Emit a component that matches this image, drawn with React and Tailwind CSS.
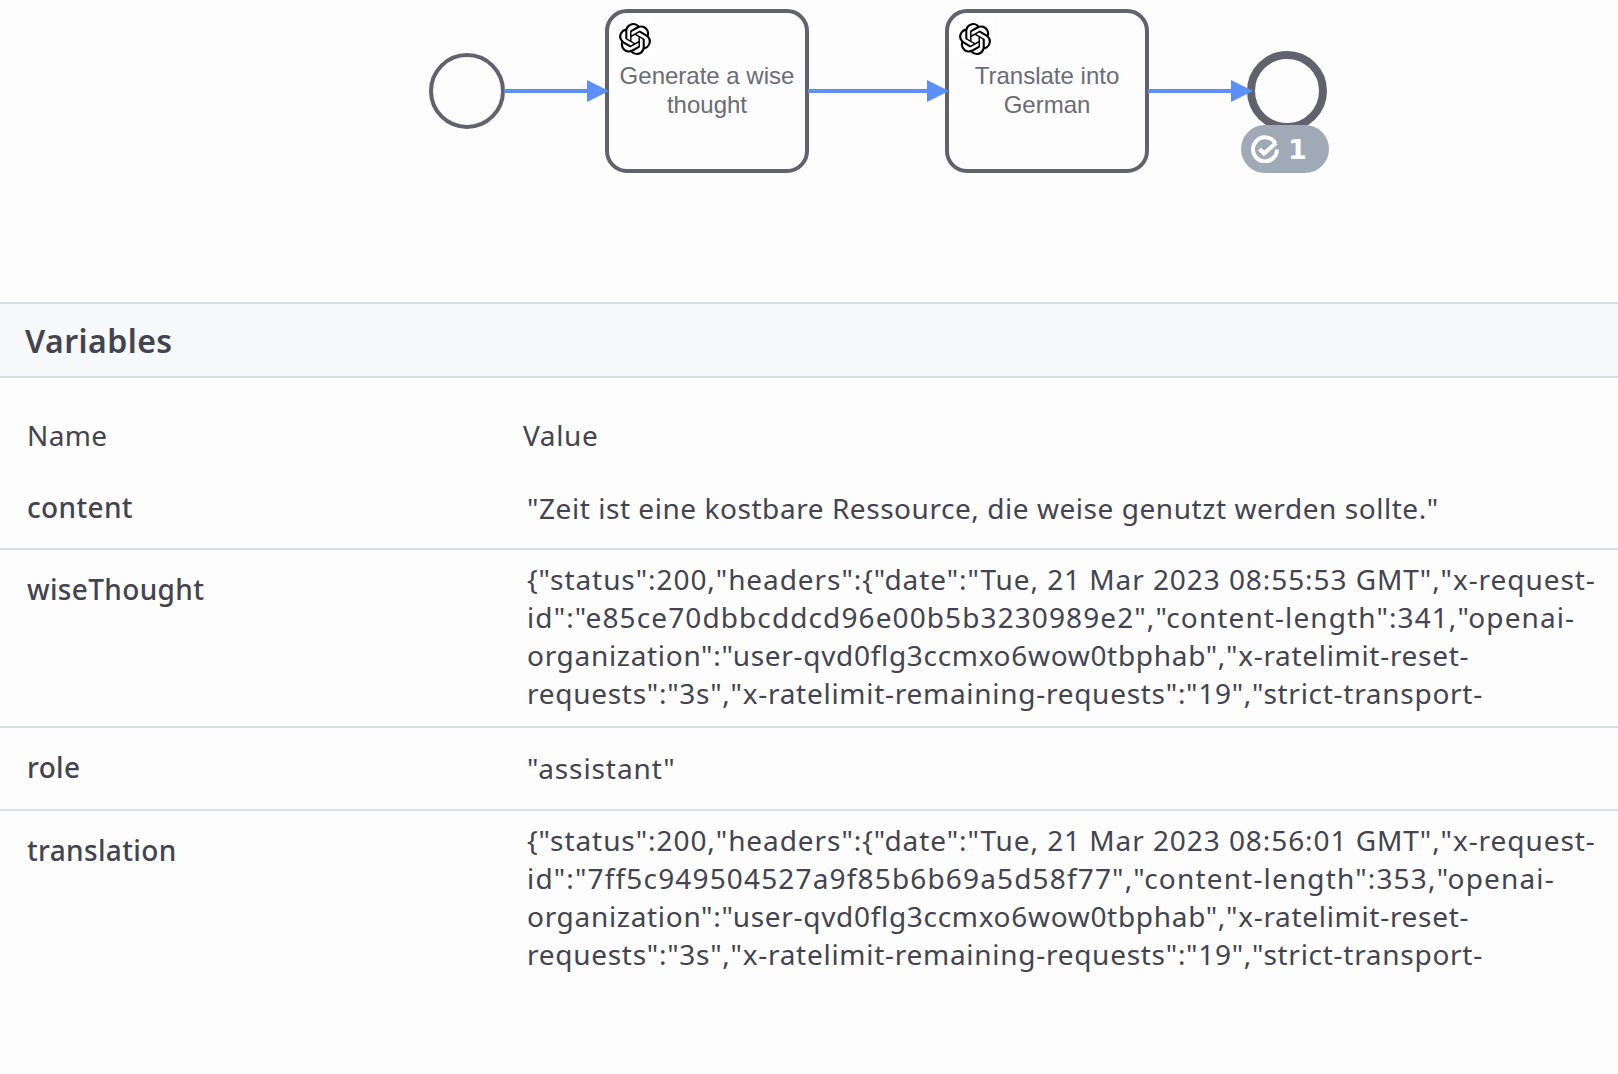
import React from 'react';
import { SiOpenai } from 'react-icons/si';

const plex = { fontFamily: '"Noto Sans", sans-serif' };

// each line gets its own tracking, the fallback font runs narrower than the original
const rows = [
  {
    name: 'content',
    height: 'h-[82px]',
    pad: 'pt-[21px]',
    lines: [['"Zeit ist eine kostbare Ressource, die weise genutzt werden sollte."', 'tracking-[0.55px]']],
  },
  {
    name: 'wiseThought',
    height: 'h-[178px]',
    pad: 'pt-[10px]',
    lines: [
      ['{"status":200,"headers":{"date":"Tue, 21 Mar 2023 08:55:53 GMT","x-request-', 'tracking-[0.93px]'],
      ['id":"e85ce70dbbcddcd96e00b5b3230989e2","content-length":341,"openai-', 'tracking-[1.1px]'],
      ['organization":"user-qvd0flg3ccmxo6wow0tbphab","x-ratelimit-reset-', 'tracking-[0.69px]'],
      ['requests":"3s","x-ratelimit-remaining-requests":"19","strict-transport-', 'tracking-[0.72px]'],
    ],
  },
  {
    name: 'role',
    height: 'h-[83px]',
    pad: 'pt-[21px]',
    lines: [['"assistant"', 'tracking-[0.9px]']],
  },
  {
    name: 'translation',
    height: 'h-[178px]',
    pad: 'pt-[10px]',
    lines: [
      ['{"status":200,"headers":{"date":"Tue, 21 Mar 2023 08:56:01 GMT","x-request-', 'tracking-[0.93px]'],
      ['id":"7ff5c949504527a9f85b6b69a5d58f77","content-length":353,"openai-', 'tracking-[1.16px]'],
      ['organization":"user-qvd0flg3ccmxo6wow0tbphab","x-ratelimit-reset-', 'tracking-[0.69px]'],
      ['requests":"3s","x-ratelimit-remaining-requests":"19","strict-transport-', 'tracking-[0.72px]'],
    ],
  },
];

const Task = ({ x, lines }) => (
  <g>
    <rect x={x} y="11" width="200" height="160" rx="20" fill="#fdfdfd" stroke="#62626e" strokeWidth="4" />
    <rect x={x + 10} y="19" width="37" height="38" fill="#ffffff" />
    <SiOpenai x={x + 12} y="23" size={32} color="#000000" />
    <text
      x={x + 100}
      textAnchor="middle"
      fill="#6b6b76"
      fontSize="24"
      fontFamily='"Liberation Sans", Arial, sans-serif'
    >
      {lines.map((line, i) => (
        <tspan key={line} x={x + 100} y={84 + i * 29}>
          {line}
        </tspan>
      ))}
    </text>
  </g>
);

const Flow = ({ x1, x2 }) => (
  <g fill="#5b8ff9">
    <rect x={x1} y="89" width={x2 - x1 - 18} height="4" />
    <polygon points={`${x2 - 22},80 ${x2},91 ${x2 - 22},102`} />
  </g>
);

const Diagram = () => (
  <div className="relative h-[302px]">
    <svg width="1618" height="302" className="block">
      <circle cx="467" cy="91" r="36" fill="#fdfdfd" stroke="#62626e" strokeWidth="4" />
      <Task x={607} lines={['Generate a wise', 'thought']} />
      <Task x={947} lines={['Translate into', 'German']} />
      <circle cx="1287" cy="91" r="36" fill="#fdfdfd" stroke="#62626e" strokeWidth="8" />
      <Flow x1={504} x2={609} />
      <Flow x1={808} x2={949} />
      <Flow x1={1148} x2={1253} />
    </svg>
    <div className="absolute left-[1241px] top-[125px] flex h-[48px] w-[88px] items-center gap-[9px] rounded-full bg-[#a0aab6] pl-[10px]">
      <svg width="28" height="28" viewBox="0 0 28 28" fill="none" stroke="#ffffff" strokeWidth="4">
        <path d="M24.5 8.5A12 12 0 1 0 26 14.5" />
        <path d="M8.5 14l4.5 4.5L25 8" />
      </svg>
      <span className="text-[27px] leading-none font-bold text-white" style={{ fontFamily: '"DejaVu Sans", sans-serif' }}>
        1
      </span>
    </div>
  </div>
);

export default function App() {
  return (
    <div className="min-h-screen overflow-hidden bg-[#fdfdfd] text-[#43444f]" style={plex}>
      <Diagram />
      <div className="flex h-[76px] items-center border-y-2 border-[#d9dde3] bg-[#f7f8fa] pt-[2px] pl-[25px] text-[32px] font-semibold tracking-[0.45px]">
        Variables
      </div>
      <div className="flex h-[90px] items-start px-[27px] pt-[38px] text-[28px] leading-[38px] tracking-[0.4px]">
        <div className="w-[496px]">Name</div>
        <div className="tracking-[0.6px]">Value</div>
      </div>
      {rows.map((row, i) => (
        <div
          key={row.name}
          className={`flex px-[27px] text-[28px] leading-[38px] ${row.height} ${i < rows.length - 1 ? 'border-b-2 border-[#d9dde3]' : ''}`}
        >
          <div className="w-[496px] shrink-0 pt-[20px] font-medium tracking-[0.35px]">{row.name}</div>
          <div className={`pl-[4px] ${row.pad}`}>
            {row.lines.map(([line, tracking]) => (
              <div key={line} className={`whitespace-nowrap ${tracking}`}>
                {line}
              </div>
            ))}
          </div>
        </div>
      ))}
    </div>
  );
}
